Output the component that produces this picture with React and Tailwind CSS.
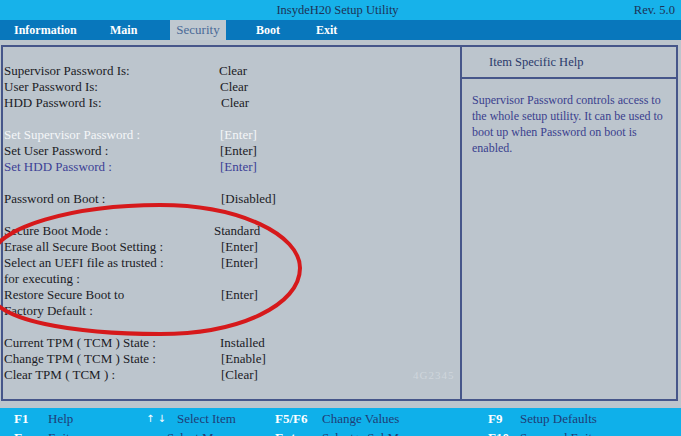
import React from "react";

const rows = [
  { l: "Supervisor Password Is:", v: "Clear", vc: "ml-[-1px]" },
  { l: "User Password Is:", v: "Clear" },
  { l: "HDD Password Is:", v: "Clear", vc: "ml-[1px]" },
  { blank: true },
  { l: "Set Supervisor Password :", v: "[Enter]", c: "text-[#f4f6f8]" },
  { l: "Set User Password :", v: "[Enter]" },
  { l: "Set HDD Password :", v: "[Enter]", c: "text-[#3b3f96]" },
  { blank: true },
  { l: "Password on Boot :", v: "[Disabled]", vc: "ml-[1px]" },
  { blank: true },
  { l: "Secure Boot Mode :", v: "Standard", vc: "ml-[-6px]" },
  { l: "Erase all Secure Boot Setting :", v: "[Enter]", vc: "ml-[1px]" },
  { l: "Select an UEFI file as trusted :", v: "[Enter]", vc: "ml-[1px]" },
  { l: "for executing :", v: "" },
  { l: "Restore Secure Boot to", v: "[Enter]", vc: "ml-[1px]" },
  { l: "Factory Default :", v: "" },
  { blank: true },
  { l: "Current TPM ( TCM ) State :", v: "Installed" },
  { l: "Change TPM ( TCM ) State :", v: "[Enable]", vc: "ml-[1px]" },
  { l: "Clear TPM ( TCM ) :", v: "[Clear]", vc: "ml-[1px]", wm: true },
];

function Row({ r }) {
  if (r.blank) return <div className="h-[16px]" />;
  return (
    <div className={`flex h-[16px] ${r.c || ""}`}>
      <div className="w-[216px] shrink-0 whitespace-nowrap">{r.l}</div>
      <div className={`w-[120px] whitespace-nowrap ${r.vc || ""}`}>{r.v}</div>
      {r.wm && (
        <div className="ml-[72px] text-[11px] text-[#cfd6dc] tracking-[1px]">4G2345</div>
      )}
    </div>
  );
}

function FKey({ k, d, kw, dw, kc }) {
  return (
    <>
      <div className={`${kw} shrink-0 font-bold text-white whitespace-nowrap ${kc || ""}`}>{k}</div>
      <div className={`${dw} shrink-0 text-[#1f3d77] whitespace-nowrap`}>{d}</div>
    </>
  );
}

export default function App() {
  return (
    <div className="relative w-[681px] h-[436px] overflow-hidden bg-[#bcc5cd] font-['Liberation_Serif',serif] flex flex-col">
      {/* title bar */}
      <div className="h-[20px] shrink-0 bg-[#17b2ea] flex items-center text-[12.5px] text-[#1d3357]">
        <div className="flex-1" />
        <div className="whitespace-nowrap">InsydeH20 Setup Utility</div>
        <div className="flex-1 text-right pr-[6px]">Rev. 5.0</div>
      </div>
      {/* menu bar */}
      <div className="h-[20px] shrink-0 bg-[#0877bc] flex text-[12px] font-bold text-white leading-[20px]">
        <div className="w-[96px] pl-[14px]">Information</div>
        <div className="w-[74px] pl-[14px]">Main</div>
        <div className="w-[56px] bg-[#bfc8d0] text-[#4b6a97] font-normal text-[13px] text-center">Security</div>
        <div className="w-[74px] pl-[30px]">Boot</div>
        <div className="pl-[16px]">Exit</div>
      </div>
      {/* main */}
      <div className="h-[368px] shrink-0 pt-[5px] pl-[1px] pr-[3px] pb-[7px]">
        <div className="h-full border-2 border-[#46568a] flex">
          <div className="w-[459px] shrink-0 border-r-2 border-[#46568a] pt-[16px] pl-[1px] text-[13px] leading-[16px] text-[#1b1b25]">
            {rows.map((r, i) => (
              <Row key={i} r={r} />
            ))}
          </div>
          <div className="flex-1 flex flex-col">
            <div className="h-[32px] shrink-0 border-b-2 border-[#46568a] flex items-center pl-[27px] text-[12.5px] text-[#2b3a6b]">
              Item Specific Help
            </div>
            <div className="pt-[13px] pl-[10px] text-[12px] leading-[16px] text-[#3a3f8e] whitespace-nowrap">
              <div>Supervisor Password controls access to</div>
              <div>the whole setup utility. It can be used to</div>
              <div>boot up when Password on boot is</div>
              <div>enabled.</div>
            </div>
          </div>
        </div>
      </div>
      {/* footer */}
      <div className="h-[28px] shrink-0 bg-[#0fb0ea] pt-[2px] text-[13px] leading-[17px] overflow-hidden">
        <div className="flex h-[17px] pl-[14px]">
          <FKey k="F1" d="Help" kw="w-[34px]" dw="w-[98px]" />
          <FKey k="↑ ↓" d="Select Item" kw="w-[31px]" dw="w-[98px]" kc="text-[10px] font-normal font-['DejaVu_Sans',sans-serif]" />
          <FKey k="F5/F6" d="Change Values" kw="w-[47px]" dw="w-[166px]" />
          <FKey k="F9" d="Setup Defaults" kw="w-[32px]" dw="w-[120px]" />
        </div>
        <div className="flex h-[17px] pl-[14px] pt-[2px]">
          <FKey k="Esc" d="Exit" kw="w-[34px]" dw="w-[98px]" />
          <FKey k="↔" d="Select Menu" kw="w-[21px]" dw="w-[108px]" kc="font-normal" />
          <FKey k="Enter" d="Select ▸ SubMenu" kw="w-[47px]" dw="w-[166px]" />
          <FKey k="F10" d="Save and Exit" kw="w-[32px]" dw="w-[120px]" />
        </div>
      </div>
      {/* red annotation ellipse */}
      <svg className="absolute left-0 top-0 pointer-events-none" width="681" height="436" viewBox="0 0 681 436">
        <path
          d="M -10 262 C -10 225, 80 205, 160 205 C 240 205, 300 235, 300 268 C 300 305, 240 334, 160 334 C 80 334, -10 322, -10 290"
          fill="none"
          stroke="#d6191b"
          strokeWidth="4"
          strokeLinecap="round"
        />
      </svg>
    </div>
  );
}
